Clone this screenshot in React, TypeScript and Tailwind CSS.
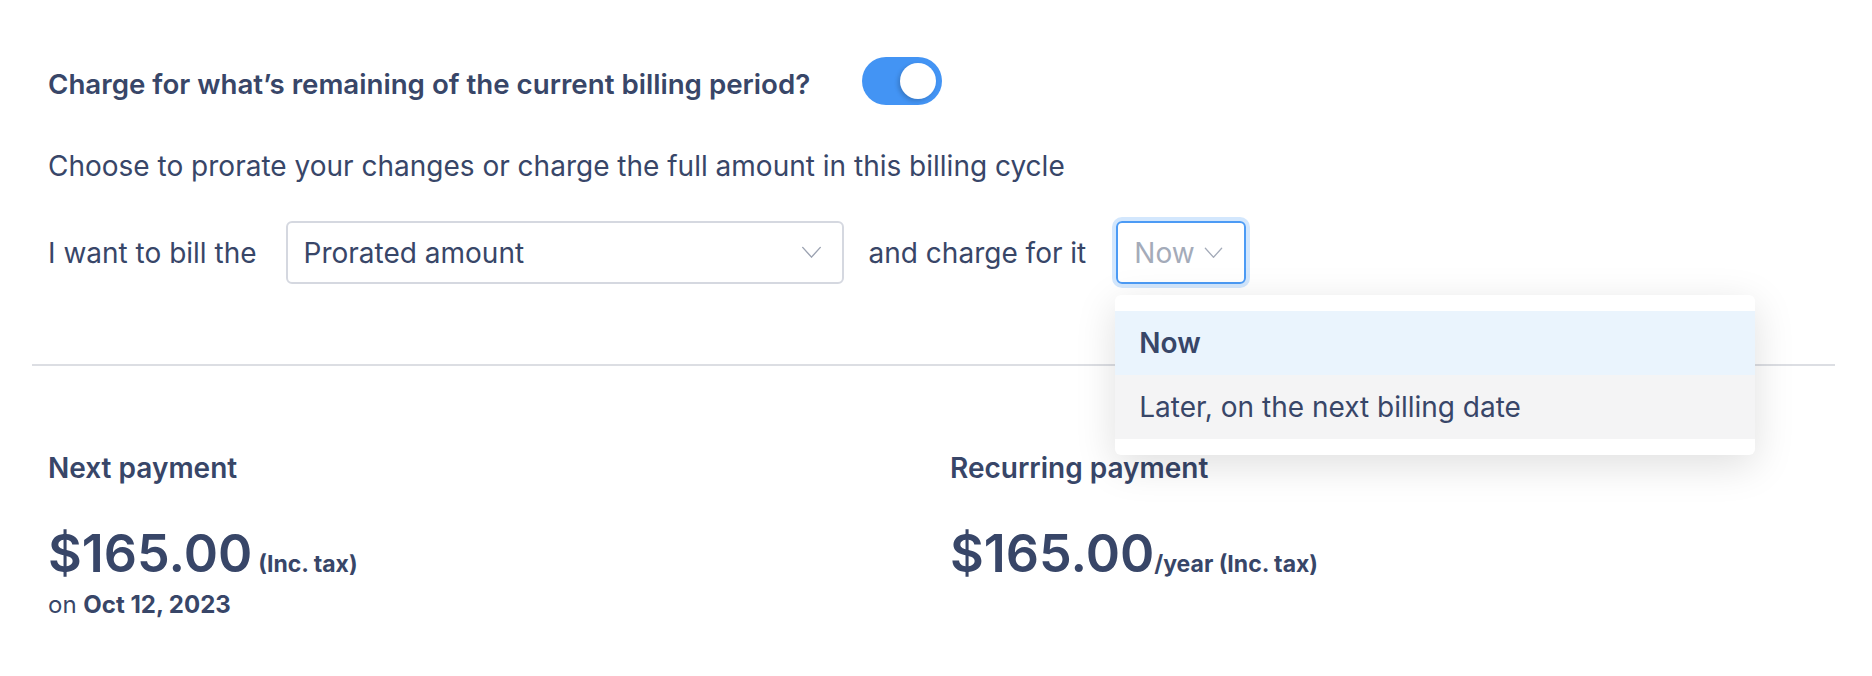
import { useState } from "react";

function Chevron({ className }: { className?: string }) {
  return (
    <svg viewBox="0 0 22 14" className={className} fill="none">
      <path d="M1.5 1.5 L11 12 L20.5 1.5" stroke="currentColor" strokeWidth="1.5" strokeLinecap="round" strokeLinejoin="round" />
    </svg>
  );
}

export default function App() {
  const [on, setOn] = useState(true);

  return (
    <div className="relative w-[1872px] h-[676px] overflow-hidden bg-white text-[#384668] font-['Inter',sans-serif]">
      <div className="pl-8 pr-[37px] pt-[57px]">
        <div className="px-4">
          {/* prorate toggle */}
          <div className="flex items-center h-12 gap-[52px]">
            <h3 className="text-[27.7px] font-semibold leading-[34px] pt-[6px]">Charge for what’s remaining of the current billing period?</h3>
            <button
              onClick={() => setOn(!on)}
              className={"flex items-center w-[80px] h-12 rounded-full p-[6px] " + (on ? "bg-[#4394f4] justify-end" : "bg-gray-300 justify-start")}
            >
              <span className="block w-9 h-9 rounded-full bg-white shadow-[-2px_2px_4px_rgba(0,0,0,0.18)]" />
            </button>
          </div>

          <p className="mt-[44px] text-[28px] leading-[34px]">Choose to prorate your changes or charge the full amount in this billing cycle</p>

          <div className="flex items-center mt-[38px] text-[28px]">
            <span>I want to bill the</span>
            <div className="ml-[29px] flex items-center justify-between w-[558px] h-[63px] rounded-md border-2 border-[#d5d8e0] pl-4 pr-5">
              <span>Prorated amount</span>
              <Chevron className="w-[21px] h-[13px] text-[#9ba2b1]" />
            </div>
            <span className="ml-[25px]">and charge for it</span>
            <div className="relative ml-[30px]">
              <div className="flex items-center gap-2 h-[63px] rounded-md border-2 border-[#4c9bf5] ring-4 ring-[#d3e7fd] pl-4 pr-5 text-[#a4abb9]">
                <span>Now</span>
                <Chevron className="w-[21px] h-[12px]" />
              </div>
              {/* open menu */}
              <ul className="absolute left-[-1px] top-[74px] z-10 w-[640px] rounded-md bg-white py-4 shadow-[0_10px_40px_rgba(0,0,0,0.13)]">
                <li className="flex items-center h-16 px-6 bg-[#eaf4fd] font-semibold">Now</li>
                <li className="flex items-center h-16 px-6 bg-[#f4f4f5]">Later, on the next billing date</li>
              </ul>
            </div>
          </div>
        </div>

        <div className="mt-[80px] border-t-2 border-[#dcdee3]" />

        {/* payments */}
        <div className="grid grid-cols-[902px_1fr] pl-4 pt-[85px]">
          <div>
            <h4 className="text-[28px] font-semibold leading-[34px]">Next payment</h4>
            <div className="mt-[39px] flex items-baseline gap-[6px]">
              <span className="text-[52px] font-semibold leading-[60px]">$165.00</span>
              <span className="text-[23px] font-bold leading-none">(Inc. tax)</span>
            </div>
            <p className="mt-[7px] text-[24px] leading-7">
              on <span className="font-bold">Oct 12, 2023</span>
            </p>
          </div>
          <div>
            <h4 className="text-[28px] font-semibold leading-[34px]">Recurring payment</h4>
            <div className="mt-[39px] flex items-baseline">
              <span className="text-[52px] font-semibold leading-[60px]">$165.00</span>
              <span className="text-[23px] font-bold leading-none">/year (Inc. tax)</span>
            </div>
          </div>
        </div>
      </div>
    </div>
  );
}
